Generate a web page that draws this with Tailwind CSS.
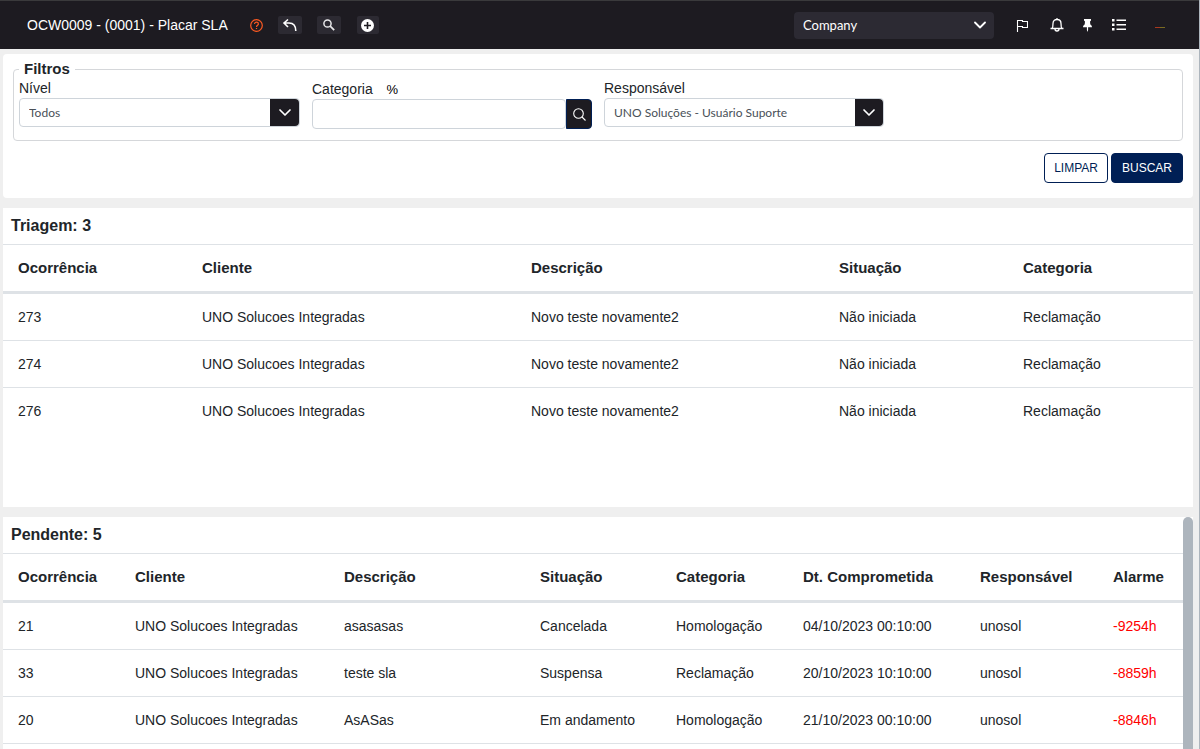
<!DOCTYPE html>
<html lang="pt-BR">
<head>
<meta charset="utf-8">
<title>OCW0009 - Placar SLA</title>
<script src="https://cdn.jsdelivr.net/npm/@tailwindcss/browser@4"></script>
</head>
<body class="h-screen overflow-hidden border-r border-[#adb5bd] bg-[#efefef] font-['Liberation_Sans',Arial,sans-serif] text-sm text-[#212529] flex flex-col">

<header class="flex h-[49px] shrink-0 items-center justify-between border-t border-[#3a3a3c] bg-[#1d1b21] pr-[34px] pl-[27px] text-white">
  <div class="flex items-center">
    <h1 class="mr-[22px] text-sm">OCW0009 - (0001) - Placar SLA</h1>
    <a href="#" aria-label="Ajuda" class="mr-[15px]">
      <svg class="size-[13px]" viewBox="0 0 13 13" fill="none" stroke="#fd5a22" stroke-width="1.200"><circle cx="6.500" cy="6.500" r="5.800"/><path d="M4.600 5C4.600 3.800 5.400 3.200 6.500 3.200S8.400 3.900 8.400 4.900C8.400 6.200 6.500 6.200 6.500 7.900M6.500 8.900v1.200"/></svg>
    </a>
    <button aria-label="Voltar" class="mr-[15px] flex h-[18px] w-6 items-center justify-center rounded-xs bg-[#2c2a32]">
      <svg class="h-[14px] w-4" viewBox="0 0 16 14" fill="none" stroke="#fff" stroke-width="1.600"><path d="M6 1.500 2 5l4 4M2 5h5c4 0 6.800 2.500 6.800 8"/></svg>
    </button>
    <button aria-label="Pesquisar" class="mr-4 flex h-[18px] w-6 items-center justify-center rounded-xs bg-[#2c2a32]">
      <svg class="size-3" viewBox="0 0 12 12" fill="none" stroke="#e8e8ea"><circle cx="4.500" cy="4.500" r="3.600" stroke-width="1.500"/><path d="m7.200 7.200 4 4" stroke-width="1.800"/></svg>
    </button>
    <button aria-label="Adicionar" class="flex h-[18px] w-[22px] items-center justify-center rounded-xs bg-[#2c2a32]">
      <svg class="size-[13px]" viewBox="0 0 13 13"><circle cx="6.500" cy="6.500" r="6.500" fill="#fff"/><path d="M6.500 3v7M3 6.500h7" stroke="#1d1b21" stroke-width="1.600"/></svg>
    </button>
  </div>
  <div class="flex items-center">
    <div class="relative mr-[22px] w-[200px]">
      <select aria-label="Empresa" class="block h-[27px] w-full appearance-none rounded-sm bg-[#2c2a33] pr-7 pl-[9px] font-['Lato',sans-serif] text-[13px] text-white"><option>Company</option></select>
      <svg class="pointer-events-none absolute top-2 right-2 h-[11px] w-3" viewBox="0 0 12 11" fill="none" stroke="#fff" stroke-width="1.800" stroke-linecap="round" stroke-linejoin="round"><path d="m1 2.500 5 5 5-5"/></svg>
    </div>
    <button aria-label="Marcar" class="mr-[22px]">
      <svg class="block h-[13px] w-3" viewBox="0 0 12 13" fill="none" stroke="#fff" stroke-width="1.100"><path d="M1.500 13V1.500h5v1h5v6h-5v-1h-5"/></svg>
    </button>
    <button aria-label="Notificações" class="mr-[18px]">
      <svg class="block size-[14px]" viewBox="0 0 14 14" fill="none" stroke="#fff" stroke-width="1.300"><path d="M7 0v1.500M.5 10.500h13M2 10.500c1-1 1-2.500 1-5 0-2.500 1.700-4 4-4s4 1.500 4 4c0 2.500 0 4 1 5M5 11c0 1.500.8 2 2 2s2-.5 2-2"/></svg>
    </button>
    <button aria-label="Fixar" class="mr-[19px]">
      <svg class="block h-[13px] w-[11px]" viewBox="0 0 11 13" fill="#fff"><path d="M2 0h7v1.500L8 2.500 8.300 5.500C9.500 6.200 10 7 10 8.300H6.100V11L5.500 13 4.900 11V8.300H1C1 7 1.500 6.200 2.700 5.500L3 2.500 2 1.500z"/></svg>
    </button>
    <button aria-label="Menu" class="mr-[29px]">
      <svg class="block size-[14px]" viewBox="0 0 14 12" fill="#fff"><path d="M0 0h2.500v2.500H0zM0 4.500h2.500V7H0zM0 9h2.500v2.500H0zM4.500.5H14v1.500H4.500zM4.500 5H14v1.500H4.500zM4.500 9.500H14V11H4.500z"/></svg>
    </button>
    <span class="mt-1 flex h-px w-[10px]"><span class="grow bg-[#a8391f]"></span><span class="grow bg-[#7a6a22]"></span></span>
  </div>
</header>

<main class="flex min-h-0 grow flex-col gap-[10px] pt-[5px] pr-[6px] pl-[3px]">
  <form class="shrink-0 rounded-sm bg-white px-[10px] pt-[6px] pb-[15px]">
    <fieldset class="rounded-sm border border-[#d5d7da] px-[5px] pb-[11px]">
      <legend class="px-[5px] text-[15px] leading-[18px] font-bold">Filtros</legend>
      <div class="flex items-start gap-3">
        <div class="w-[281px]">
          <label for="nivel" class="block h-5 leading-5">Nível</label>
          <div class="relative flex">
            <select id="nivel" class="h-[29px] w-full appearance-none rounded-sm border border-[#ced4da] bg-white pr-9 pl-[9px] font-['Lato',sans-serif] text-xs text-[#495057]"><option>Todos</option></select>
            <span class="pointer-events-none absolute inset-y-px right-px flex w-[29px] items-center justify-center rounded-r-sm bg-[#1d1b21]"><svg class="h-[10px] w-[14px]" viewBox="0 0 14 10" fill="none" stroke="#fff" stroke-width="1.700" stroke-linecap="round" stroke-linejoin="round"><path d="m2 2 5 5 5-5"/></svg></span>
          </div>
        </div>
        <div class="w-[280px] pt-px">
          <label for="categoria" class="block h-5 leading-5">Categoria <span class="ml-[10px] text-[13px] text-black">%</span></label>
          <div class="flex">
            <input id="categoria" type="text" class="h-[30px] min-w-0 grow rounded-sm border border-[#ced4da] bg-white px-2">
            <button type="button" aria-label="Buscar categoria" class="flex w-[26px] items-center justify-center rounded-r-sm border border-[#001f55] bg-[#1d1b21]"><svg class="size-[13px]" viewBox="0 0 13 13" fill="none" stroke="#fff" stroke-width="1.100"><circle cx="5.500" cy="5.500" r="4.800"/><path d="m9 9 3.500 3.500"/></svg></button>
          </div>
        </div>
        <div class="w-[280px]">
          <label for="responsavel" class="block h-5 leading-5">Responsável</label>
          <div class="relative flex">
            <select id="responsavel" class="h-[29px] w-full appearance-none rounded-sm border border-[#ced4da] bg-white pr-9 pl-[9px] font-['Lato',sans-serif] text-xs text-[#495057]"><option>UNO Soluções - Usuário Suporte</option></select>
            <span class="pointer-events-none absolute inset-y-px right-px flex w-7 items-center justify-center rounded-r-sm bg-[#1d1b21]"><svg class="h-[10px] w-[14px]" viewBox="0 0 14 10" fill="none" stroke="#fff" stroke-width="1.700" stroke-linecap="round" stroke-linejoin="round"><path d="m2 2 5 5 5-5"/></svg></span>
          </div>
        </div>
      </div>
    </fieldset>
    <div class="mt-3 flex justify-end gap-[3px] text-xs">
      <button type="reset" class="h-[30px] rounded-sm border border-[#001f55] bg-white px-[9px] text-[#001f55]">LIMPAR</button>
      <button type="submit" class="h-[30px] rounded-sm border border-[#001f55] bg-[#001f55] px-[10px] text-white">BUSCAR</button>
    </div>
  </form>

  <section class="min-h-[299px] shrink-0 bg-white">
    <h2 class="px-2 text-base leading-9 font-bold">Triagem: 3</h2>
    <table class="w-full table-fixed border-separate border-spacing-0 text-left [&_td]:h-[47px] [&_td]:border-b [&_td]:border-[#dee2e6] [&_td]:px-[15px] [&_th]:h-[50px] [&_th]:border-t [&_th]:border-b-3 [&_th]:border-[#dee2e6] [&_th]:px-[15px] [&_th]:text-[15px] [&_tr:last-child>td]:border-transparent">
      <colgroup><col class="w-[184px]"><col class="w-[329px]"><col class="w-[308px]"><col class="w-[184px]"><col class="w-[185px]"></colgroup>
      <thead><tr><th>Ocorrência</th><th>Cliente</th><th>Descrição</th><th>Situação</th><th>Categoria</th></tr></thead>
      <tbody>
        <tr><td>273</td><td>UNO Solucoes Integradas</td><td>Novo teste novamente2</td><td>Não iniciada</td><td>Reclamação</td></tr>
        <tr><td>274</td><td>UNO Solucoes Integradas</td><td>Novo teste novamente2</td><td>Não iniciada</td><td>Reclamação</td></tr>
        <tr><td>276</td><td>UNO Solucoes Integradas</td><td>Novo teste novamente2</td><td>Não iniciada</td><td>Reclamação</td></tr>
      </tbody>
    </table>
  </section>

  <section class="flex min-h-0 grow overflow-hidden bg-white">
    <div class="min-w-0 grow">
      <h2 class="px-2 text-base leading-9 font-bold">Pendente: 5</h2>
      <table class="w-full table-fixed border-separate border-spacing-0 text-left whitespace-nowrap [&_td]:h-[47px] [&_td]:border-b [&_td]:border-[#dee2e6] [&_td]:px-[15px] [&_th]:h-[50px] [&_th]:border-t [&_th]:border-b-3 [&_th]:border-[#dee2e6] [&_th]:px-[15px] [&_th]:text-[15px]">
        <colgroup><col class="w-[117px]"><col class="w-[209px]"><col class="w-[196px]"><col class="w-[136px]"><col class="w-[127px]"><col class="w-[177px]"><col class="w-[133px]"><col class="w-[85px]"></colgroup>
        <thead><tr><th>Ocorrência</th><th>Cliente</th><th>Descrição</th><th>Situação</th><th>Categoria</th><th>Dt. Comprometida</th><th>Responsável</th><th>Alarme</th></tr></thead>
        <tbody>
          <tr><td>21</td><td>UNO Solucoes Integradas</td><td>asasasas</td><td>Cancelada</td><td>Homologação</td><td>04/10/2023 00:10:00</td><td>unosol</td><td class="text-[#ff0000]">-9254h</td></tr>
          <tr><td>33</td><td>UNO Solucoes Integradas</td><td>teste sla</td><td>Suspensa</td><td>Reclamação</td><td>20/10/2023 10:10:00</td><td>unosol</td><td class="text-[#ff0000]">-8859h</td></tr>
          <tr><td>20</td><td>UNO Solucoes Integradas</td><td>AsASas</td><td>Em andamento</td><td>Homologação</td><td>21/10/2023 00:10:00</td><td>unosol</td><td class="text-[#ff0000]">-8846h</td></tr>
        </tbody>
      </table>
    </div>
    <div class="w-[10px] shrink-0 rounded-t-full bg-[#adb5bd]"></div>
  </section>
</main>
</body>
</html>
